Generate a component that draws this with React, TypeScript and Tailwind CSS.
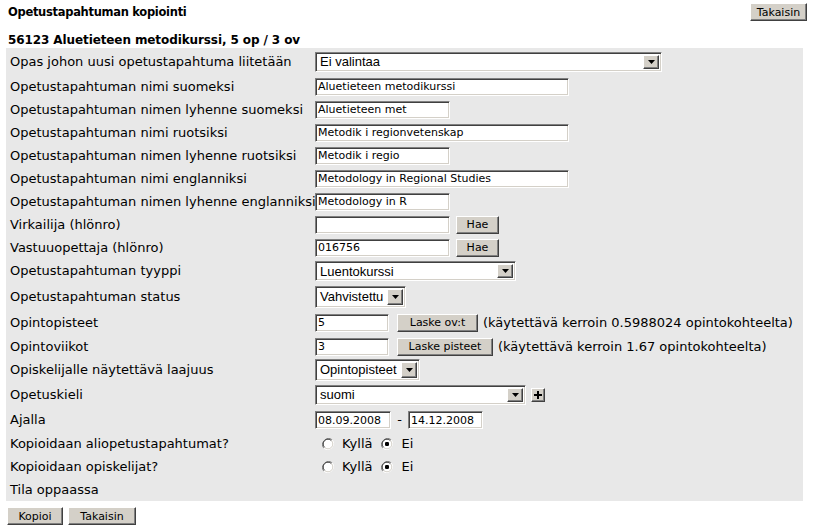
import React from "react";

const insetCls =
  "bg-white border border-t-[#808080] border-l-[#808080] border-b-white border-r-white shadow-[inset_1px_1px_0_#404040,inset_-1px_-1px_0_#d4d0c8]";
const raisedCls =
  "bg-[#d4d0c8] border border-t-white border-l-white border-b-[#404040] border-r-[#404040] shadow-[inset_-1px_-1px_0_#808080]";

function TextInput({ w, value }: { w: number; value: string }) {
  return (
    <div
      className={`${insetCls} h-[18px] flex items-center pl-[2px] text-[11px] leading-none whitespace-nowrap overflow-hidden`}
      style={{ width: w }}
    >
      {value}
    </div>
  );
}

function Btn({ w, label }: { w: number; label: string }) {
  return (
    <div
      className={`${raisedCls} h-[18px] flex items-center justify-center text-[11px] leading-none whitespace-nowrap`}
      style={{ width: w }}
    >
      {label}
    </div>
  );
}

function Select({ w, h, value }: { w: number; h: number; value: string }) {
  return (
    <div
      className={`${insetCls} flex items-stretch p-[2px]`}
      style={{ width: w, height: h }}
    >
      <div className="flex-1 flex items-center pl-[2px] font-['Liberation_Sans'] text-[13px] leading-none whitespace-nowrap overflow-hidden">
        {value}
      </div>
      <div className={`${raisedCls} w-[16px] flex items-center justify-center`}>
        <svg width="7" height="4" viewBox="0 0 7 4">
          <path d="M0 0H7L3.5 4Z" fill="#000" />
        </svg>
      </div>
    </div>
  );
}

function Radio({ checked }: { checked?: boolean }) {
  return (
    <svg width="12" height="12" viewBox="0 0 12 12" className="shrink-0">
      <circle cx="6" cy="6" r="5.5" fill="#fff" />
      <path d="M1.8 10.2A6 6 0 0 1 10.2 1.8" stroke="#808080" strokeWidth="1" fill="none" />
      <path d="M2.6 9.4A4.8 4.8 0 0 1 9.4 2.6" stroke="#404040" strokeWidth="1" fill="none" />
      <path d="M10.2 1.8A6 6 0 0 1 1.8 10.2" stroke="#ffffff" strokeWidth="1" fill="none" />
      <path d="M9.4 2.6A4.8 4.8 0 0 1 2.6 9.4" stroke="#d4d0c8" strokeWidth="1" fill="none" />
      {checked && <rect x="4" y="4" width="4" height="4" rx="1.2" fill="#000" />}
    </svg>
  );
}

function Row({
  h,
  label,
  children,
}: {
  h: number;
  label: string;
  children?: React.ReactNode;
}) {
  return (
    <div className="flex items-center" style={{ height: h }}>
      <div className="w-[309px] pl-[4px] shrink-0 whitespace-nowrap">{label}</div>
      <div className="flex items-center">{children}</div>
    </div>
  );
}

function RadioPair() {
  return (
    <div className="flex items-center pl-[7px]">
      <Radio />
      <span className="ml-[8px]">Kyllä</span>
      <span className="ml-[9px]">
        <Radio checked />
      </span>
      <span className="ml-[8px]">Ei</span>
    </div>
  );
}

export default function App() {
  return (
    <div className="w-[822px] h-[529px] bg-white font-['DejaVu_Sans'] text-[13px] text-black">
      <div className="flex items-center justify-between pt-[3px] pl-[8px] pr-[15px]">
        <div className="font-bold text-[11.5px] tracking-[-0.3px] leading-[18px]">
          Opetustapahtuman kopiointi
        </div>
        <Btn w={57} label="Takaisin" />
      </div>
      <div className="h-[27px] pt-[12px] pl-[8px] font-bold text-[12px] tracking-[-0.1px] leading-[15px]">
        56123 Aluetieteen metodikurssi, 5 op / 3 ov
      </div>
      <div className="ml-[6px] w-[797px] bg-[#e8e8e8] flex flex-col">
        <Row h={27} label="Opas johon uusi opetustapahtuma liitetään">
          <Select w={347} h={20} value="Ei valintaa" />
        </Row>
        <Row h={23} label="Opetustapahtuman nimi suomeksi">
          <TextInput w={254} value="Aluetieteen metodikurssi" />
        </Row>
        <Row h={23} label="Opetustapahtuman nimen lyhenne suomeksi">
          <TextInput w={135} value="Aluetieteen met" />
        </Row>
        <Row h={23} label="Opetustapahtuman nimi ruotsiksi">
          <TextInput w={254} value="Metodik i regionvetenskap" />
        </Row>
        <Row h={23} label="Opetustapahtuman nimen lyhenne ruotsiksi">
          <TextInput w={135} value="Metodik i regio" />
        </Row>
        <Row h={23} label="Opetustapahtuman nimi englanniksi">
          <TextInput w={254} value="Metodology in Regional Studies" />
        </Row>
        <Row h={23} label="Opetustapahtuman nimen lyhenne englanniksi">
          <TextInput w={135} value="Metodology in R" />
        </Row>
        <Row h={23} label="Virkailija (hlönro)">
          <TextInput w={135} value="" />
          <div className="ml-[6px]">
            <Btn w={43} label="Hae" />
          </div>
        </Row>
        <Row h={23} label="Vastuuopettaja (hlönro)">
          <TextInput w={135} value="016756" />
          <div className="ml-[6px]">
            <Btn w={43} label="Hae" />
          </div>
        </Row>
        <Row h={24} label="Opetustapahtuman tyyppi">
          <Select w={201} h={20} value="Luentokurssi" />
        </Row>
        <Row h={27} label="Opetustapahtuman status">
          <Select w={91} h={22} value="Vahvistettu" />
        </Row>
        <Row h={25} label="Opintopisteet">
          <TextInput w={74} value="5" />
          <div className="ml-[8px]">
            <Btn w={81} label="Laske ov:t" />
          </div>
          <span className="ml-[5px] whitespace-nowrap">
            (käytettävä kerroin 0.5988024 opintokohteelta)
          </span>
        </Row>
        <Row h={23} label="Opintoviikot">
          <TextInput w={74} value="3" />
          <div className="ml-[8px]">
            <Btn w={96} label="Laske pisteet" />
          </div>
          <span className="ml-[5px] whitespace-nowrap">
            (käytettävä kerroin 1.67 opintokohteelta)
          </span>
        </Row>
        <Row h={23} label="Opiskelijalle näytettävä laajuus">
          <Select w={105} h={22} value="Opintopisteet" />
        </Row>
        <Row h={27} label="Opetuskieli">
          <Select w={211} h={20} value="suomi" />
          <div
            className={`${raisedCls} ml-[5px] w-[14px] h-[14px] flex items-center justify-center`}
          >
            <svg width="8" height="8" viewBox="0 0 8 8">
              <path d="M3 0H5V3H8V5H5V8H3V5H0V3H3Z" fill="#000" />
            </svg>
          </div>
        </Row>
        <Row h={24} label="Ajalla">
          <TextInput w={76} value="08.09.2008" />
          <span className="w-[17px] text-center">-</span>
          <TextInput w={75} value="14.12.2008" />
        </Row>
        <Row h={23} label="Kopioidaan aliopetustapahtumat?">
          <RadioPair />
        </Row>
        <Row h={24} label="Kopioidaan opiskelijat?">
          <RadioPair />
        </Row>
        <Row h={22} label="Tila oppaassa" />
      </div>
      <div className="flex gap-[5px] pt-[6px] pl-[7px]">
        <Btn w={56} label="Kopioi" />
        <Btn w={68} label="Takaisin" />
      </div>
    </div>
  );
}
